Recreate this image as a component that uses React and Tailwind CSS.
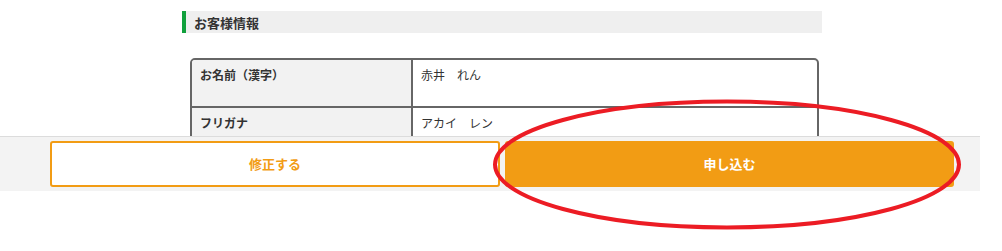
import React from 'react';

const rows = [
  { label: 'お名前（漢字）', value: '赤井　れん', tall: true },
  { label: 'フリガナ', value: 'アカイ　レン', tall: false },
];

export default function App() {
  return (
    <div
      className="relative w-[1002px] h-[251px] overflow-hidden bg-white text-[#333]"
      style={{ fontFamily: '"Noto Sans CJK JP", "Noto Sans", sans-serif' }}
    >
      {/* page content, cut off by the footer bar */}
      <div className="h-[136px] overflow-hidden pt-[11px]">
        <div className="ml-[182px] w-[640px]">
          <h2 className="flex h-[22px] items-center border-l-4 border-[#10a03c] bg-[#efefef] pl-2 text-[13px] font-bold leading-none">
            お客様情報
          </h2>

          <div className="ml-[8px] mt-[25px] w-[629px] overflow-hidden rounded-t-[5px] border-2 border-[#666]">
            {rows.map((row, i) => (
              <div
                key={row.label}
                className={`grid grid-cols-[219px_1fr] ${i < rows.length - 1 ? 'border-b-2 border-[#666]' : ''} ${row.tall ? 'h-[48px]' : 'h-[40px]'}`}
              >
                <div className="bg-[#f2f2f2] px-2 pt-[6px] text-[12px] font-bold leading-[18px]">
                  {row.label}
                </div>
                <div className="border-l-2 border-[#666] px-2 pt-[6px] text-[12px] leading-[18px]">
                  {row.value}
                </div>
              </div>
            ))}
          </div>
        </div>
      </div>

      {/* footer action bar */}
      <div className="flex w-[980px] gap-[5px] border-t border-[#dcdcdc] bg-[#f3f3f3] py-[4px] pl-[50px]">
        <button
          type="button"
          className="flex h-[46px] w-[450px] items-center justify-center rounded-[3px] border-2 border-[#f29c14] bg-white text-[13px] font-bold leading-[18px] text-[#f29c14]"
        >
          修正する
        </button>
        <button
          type="button"
          className="flex h-[46px] w-[449px] items-center justify-center rounded-[3px] border-2 border-[#f29c14] bg-[#f29c14] text-[13px] font-bold leading-[18px] text-white"
        >
          申し込む
        </button>
      </div>

      {/* red annotation circle */}
      <svg
        className="pointer-events-none absolute left-0 top-0"
        width="1002"
        height="251"
        viewBox="0 0 1002 251"
      >
        <ellipse cx="727" cy="164.5" rx="232" ry="63" fill="none" stroke="#ec1c24" strokeWidth="4" />
      </svg>
    </div>
  );
}
